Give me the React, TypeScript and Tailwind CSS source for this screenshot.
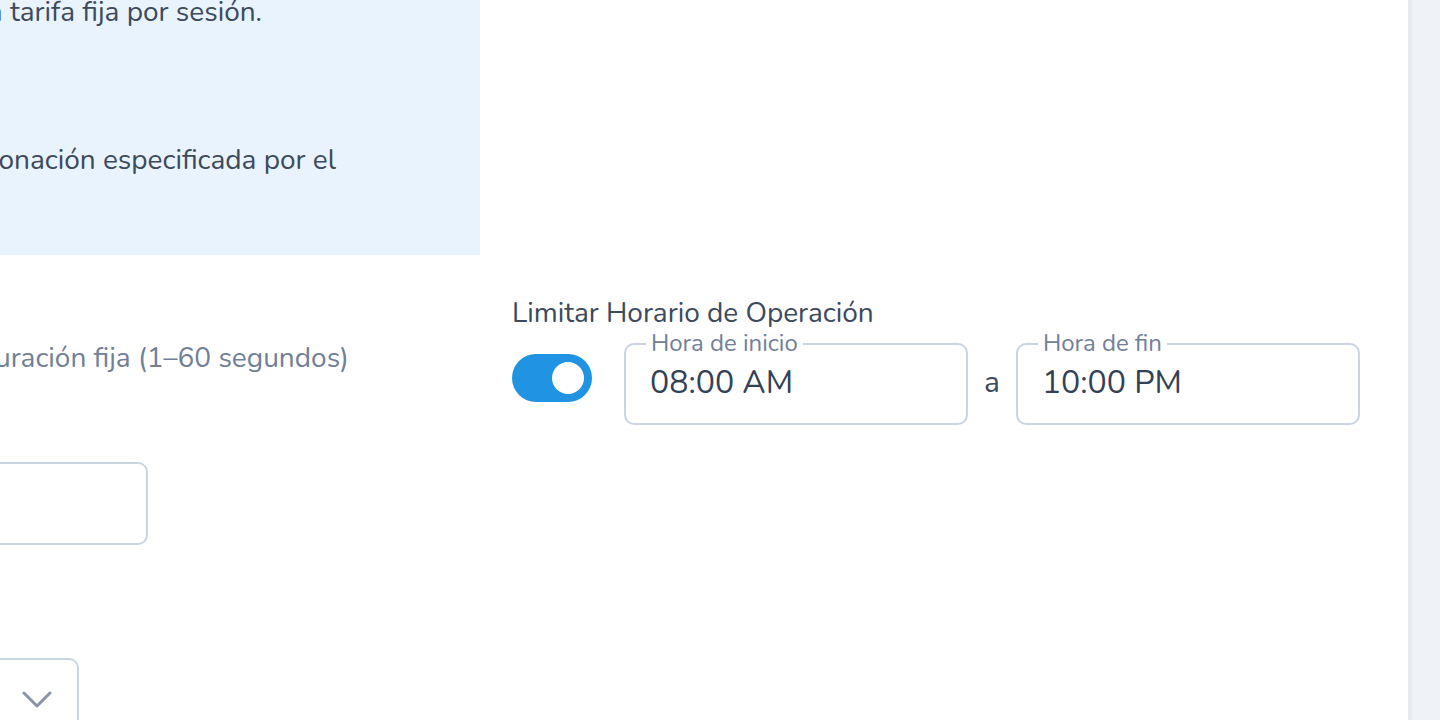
const font = { fontFamily: '"Nunito", "Lato", "Noto Sans", sans-serif' };

function TimeField({ label, value }: { label: string; value: string }) {
  return (
    <div className="relative flex h-[82px] w-[344px] items-center rounded-[10px] border-2 border-[#cbd5e1] bg-white px-6">
      <span className="absolute -top-[15px] left-[20px] bg-white px-[5px] text-[24px] leading-[26px] text-[#718096]">
        {label}
      </span>
      <span className="-mt-[2px] text-[32px] leading-[40px] text-[#334155]">{value}</span>
    </div>
  );
}

export default function App() {
  return (
    <div className="flex h-[720px] w-[1440px] overflow-hidden bg-white" style={font}>
      <main className="flex flex-1 gap-8 overflow-hidden">
        {/* left column, partly outside the view */}
        <section className="-ml-[368px] flex w-[848px] shrink-0 flex-col">
          <div className="flex h-[255px] shrink-0 flex-col bg-[#e8f3fd] pr-[144px] text-[28px] leading-[36px] text-[#3d4a5c]">
            <div className="-mt-[6px] flex justify-end whitespace-nowrap pr-[74px]">
              <span>Se cobra una tarifa fija por sesión.</span>
            </div>
            <div className="mt-[112px] flex justify-end whitespace-nowrap">
              <span>Se cobra la donación especificada por el</span>
            </div>
          </div>
          <div className="mt-[85px] flex shrink-0 justify-end whitespace-nowrap pr-[131px] text-[28px] leading-[36px] text-[#718096]">
            <span>Duración fija (1–60 segundos)</span>
          </div>
          <div className="mt-[86px] ml-[100px] h-[83px] w-[416px] shrink-0 rounded-[10px] border-2 border-[#cbd5e1]" />
          <div className="mt-[113px] ml-[100px] flex h-[90px] w-[347px] shrink-0 items-start justify-end rounded-[10px] border-2 border-[#cbd5e1] pr-[25px] pt-[31px]">
            <svg width="30" height="18" viewBox="0 0 30 18" fill="none">
              <path d="M2 2 L15 15 L28 2" stroke="#8a94a6" strokeWidth="3" strokeLinecap="round" strokeLinejoin="round" />
            </svg>
          </div>
        </section>

        {/* right column */}
        <section className="flex w-[848px] shrink-0 flex-col pt-[295px]">
          <div className="text-[28px] leading-[36px] text-[#3d4a5c]">Limitar Horario de Operación</div>
          <div className="mt-[12px] flex items-start">
            <div className="mt-[11px] flex h-[48px] w-[80px] items-center justify-end rounded-full bg-[#2193e3] px-2">
              <div className="h-8 w-8 rounded-full bg-white" />
            </div>
            <div className="ml-8">
              <TimeField label="Hora de inicio" value="08:00 AM" />
            </div>
            <span className="mx-[16px] mt-[20px] text-[30px] leading-[40px] text-[#3d4a5c]">a</span>
            <TimeField label="Hora de fin" value="10:00 PM" />
          </div>
        </section>
      </main>
      <aside className="h-full w-[32px] shrink-0 border-l-4 border-[#e7ebf1] bg-[#eff3f8]" />
    </div>
  );
}
